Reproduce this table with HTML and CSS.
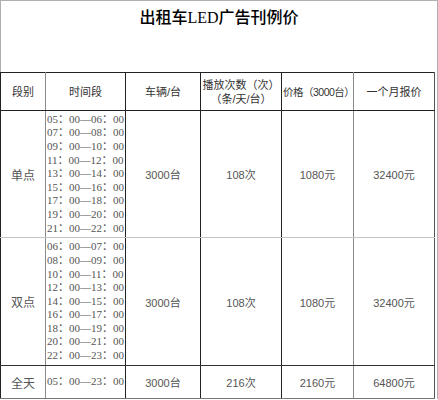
FILE: index.html
```html
<!DOCTYPE html>
<html>
<head>
<meta charset="utf-8">
<link rel="stylesheet" href="styles.css">
</head>
<body>
<div class="sheet">
  <div class="title-area">
    <h1 class="title">出租车LED广告刊例价</h1>
  </div>
  <table class="price">
    <colgroup>
      <col class="c1"><col class="c2"><col class="c3"><col class="c4"><col class="c5"><col class="c6">
    </colgroup>
    <tr class="head">
      <td class="b-left">段别</td>
      <td class="b-dark">时间段</td>
      <td class="b-dark">车辆/台</td>
      <td class="b-dark">播放次数（次）<br>（条/天/台）</td>
      <td class="narrow">价格（3000台）</td>
      <td class="b-right">一个月报价</td>
    </tr>
    <tr class="r-single">
      <td class="b-left">单点</td>
      <td class="times b-dark">
        <div>05：00—06：00</div>
        <div>07：00—08：00</div>
        <div>09：00—10：00</div>
        <div>11：00—12：00</div>
        <div>13：00—14：00</div>
        <div>15：00—16：00</div>
        <div>17：00—18：00</div>
        <div>19：00—20：00</div>
        <div>21：00—22：00</div>
      </td>
      <td class="b-dark">3000台</td>
      <td class="b-dark">108次</td>
      <td>1080元</td>
      <td class="b-right">32400元</td>
    </tr>
    <tr class="r-double">
      <td class="b-left">双点</td>
      <td class="times b-dark">
        <div>06：00—07：00</div>
        <div>08：00—09：00</div>
        <div>10：00—11：00</div>
        <div>12：00—13：00</div>
        <div>14：00—15：00</div>
        <div>16：00—17：00</div>
        <div>18：00—19：00</div>
        <div>20：00—21：00</div>
        <div>22：00—23：00</div>
      </td>
      <td class="b-dark">3000台</td>
      <td class="b-dark">108次</td>
      <td>1080元</td>
      <td class="b-right">32400元</td>
    </tr>
    <tr class="r-all">
      <td class="b-left">全天</td>
      <td class="times b-dark"><div>05：00—23：00</div></td>
      <td class="b-dark">3000台</td>
      <td class="b-dark">216次</td>
      <td>2160元</td>
      <td class="b-right">64800元</td>
    </tr>
  </table>
</div>
</body>
</html>
```
FILE: styles.css
```css
html, body {
  margin: 0;
  padding: 0;
  background: #fff;
}
body {
  width: 438px;
  height: 400px;
  overflow: hidden;
  font-family: "Liberation Sans", "Noto Sans CJK SC", sans-serif;
  color: #444;
}
.sheet {
  width: 436px;
  border-top: 1px solid #b0b0b0;
  border-left: 1px solid #b0b0b0;
  border-right: 1px solid #b0b0b0;
}
.title-area {
  height: 71px;
}
.title {
  margin: 0;
  padding-top: 7px;
  text-align: center;
  font-family: "Liberation Serif", "Noto Sans CJK SC", serif;
  font-size: 16px;
  line-height: 20px;
  font-weight: 500;
  color: #000;
}
.price {
  border-collapse: collapse;
  table-layout: fixed;
  width: 434px;
  margin-left: -1px;
}
.c1 { width: 45px; }
.c2 { width: 80px; }
.c3 { width: 75px; }
.c4 { width: 81px; }
.c5 { width: 72px; }
.c6 { width: 81px; }
.price td {
  border: 1px solid #8a8a8a;
  padding: 0;
  text-align: center;
  vertical-align: middle;
  font-size: 11px;
  color: #555;
  white-space: nowrap;
}
.price td.b-left { border-left-color: #222; }
.price td.b-dark { border-right-color: #222; }
.price td.b-right { border-right-color: #555; }
.head td {
  height: 37px;
  font-size: 11px;
  line-height: 14px;
  color: #333;
  border-top-color: #222;
  border-bottom-color: #222;
}
.head td.narrow {
  text-align: left;
  padding-left: 1px;
  font-size: 10.5px;
  letter-spacing: -0.5px;
}
.r-single td {
  height: 126px;
  border-bottom-color: #c4c4c4;
}
.r-double td {
  height: 127px;
  border-bottom-color: #333;
}
.r-all td {
  height: 32px;
  border-bottom-color: #777;
}
.price td.times {
  text-align: left;
  padding-left: 1px;
  font-family: "Liberation Serif", "Noto Sans CJK SC", serif;
  font-size: 11px;
  line-height: 13.6px;
  color: #555;
}
.r-single td:first-child,
.r-double td:first-child,
.r-all td:first-child {
  font-size: 12px;
}
```
